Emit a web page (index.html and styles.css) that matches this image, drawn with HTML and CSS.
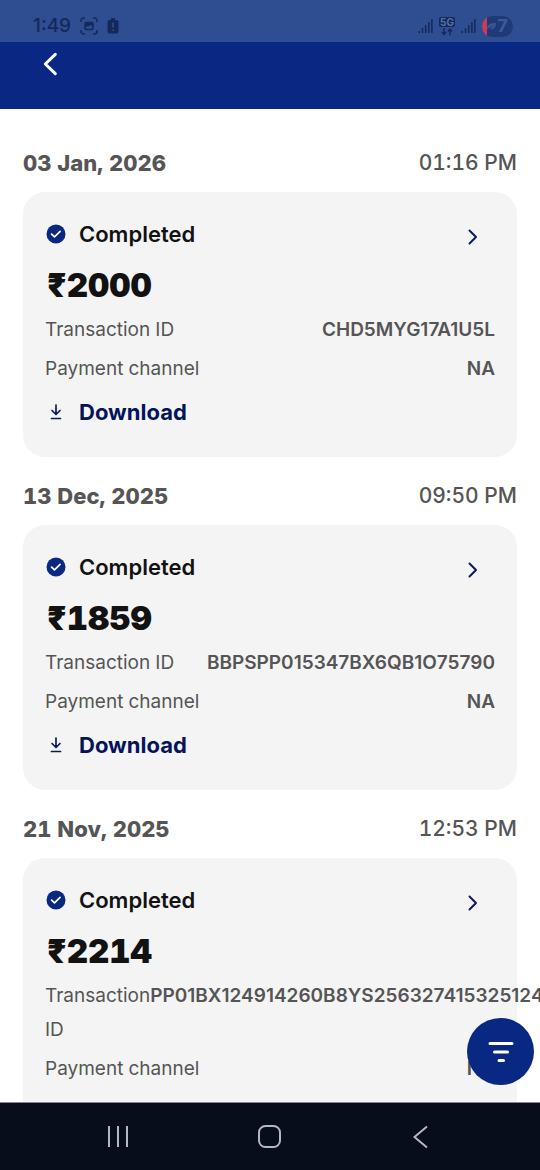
FILE: index.html
```html
<!DOCTYPE html>
<html lang="en">
<head>
<meta charset="utf-8">
<meta name="viewport" content="width=device-width, initial-scale=1">
<title>Transactions</title>
<link rel="stylesheet" href="styles.css">
</head>
<body>
<svg class="sprite" aria-hidden="true">
  <symbol id="check" viewBox="0 0 20 20"><circle cx="10" cy="10" r="9.5" fill="#092884"/><path d="M5.6 10.2l2.9 2.7 5.6-5.5" fill="none" stroke="#fff" stroke-width="1.7" stroke-linecap="round" stroke-linejoin="round"/></symbol>
  <symbol id="chevron" viewBox="0 0 12 18"><path d="M2.5 2.500L9 9l-6.500 6.500" fill="none" stroke="#0a1c60" stroke-width="2" stroke-linecap="round" stroke-linejoin="round"/></symbol>
  <symbol id="download" viewBox="0 0 20 20"><path d="M10 3v8.500M6 8.500l4 4 4-4M5.500 16.500h9" fill="none" stroke="#0a1c60" stroke-width="1.700" stroke-linecap="round" stroke-linejoin="round"/></symbol>
  <symbol id="signal" viewBox="0 0 15 16"><path d="M1.200 13v2M4.500 10v5M7.700 7v8M10.900 4v11M13.900 1v14" fill="none" stroke="currentColor" stroke-width="1.500"/></symbol>
</svg>
<div class="screen">
  <div class="status">
    <div class="status-group">
      <span class="clock">1:49</span>
      <svg width="18" height="18" viewBox="0 0 18 18"><path d="M1 5V3.500A2.500 2.500 0 013.500 1H5M13 1h1.500A2.500 2.500 0 0117 3.500V5M17 13v1.500a2.500 2.500 0 01-2.500 2.500H13M5 17H3.500A2.500 2.500 0 011 14.500V13" fill="none" stroke="currentColor" stroke-width="1.500"/><rect x="5" y="5.500" width="8" height="7" rx="1.500" fill="none" stroke="currentColor" stroke-width="1.600"/><path d="M5 5.500h8v4l-2.500-1.500-2 1.500H5z" fill="currentColor"/></svg>
      <svg width="12" height="18" viewBox="0 0 12 18"><path d="M4 1h4v2h1.500A2 2 0 0111.500 5v9.500a2 2 0 01-2 2h-7a2 2 0 01-2-2V5a2 2 0 012-2H4z" fill="currentColor"/><path d="M6 5.500v5M6 12.500v1.500" stroke="#2f4e92" stroke-width="1.600"/></svg>
    </div>
    <div class="status-group status-right">
      <svg width="15" height="16"><use href="#signal"/></svg>
      <span class="network"><b>5G</b><svg width="12" height="8" viewBox="0 0 12 8"><path d="M3 0v6M1 4l2 2.500L5 4M9 7.500V1M7 3.500L9 1l2 2.500" fill="none" stroke="currentColor" stroke-width="1.400"/></svg></span>
      <svg width="15" height="16"><use href="#signal"/></svg>
      <span class="battery"><svg width="9" height="8" viewBox="0 0 9 8"><path d="M0 7C0 2 4 1 9 1c0 5-3 7-6 6L7 3" fill="#36569b"/></svg>7</span>
    </div>
  </div>
  <header class="header">
    <button class="icon-button" aria-label="Back"><svg width="16" height="26" viewBox="0 0 16 26"><path d="M13.300 3.300L3.300 13l10 9.700" fill="none" stroke="#fff" stroke-width="3" stroke-linecap="round" stroke-linejoin="round"/></svg></button>
  </header>
  <main class="list">
    <section class="entry">
      <div class="entry-head"><h2>03 Jan, 2026</h2><time>01:16 PM</time></div>
      <article class="card">
        <div class="state"><svg width="20" height="20"><use href="#check"/></svg><span>Completed</span><button class="icon-button" aria-label="Details"><svg width="12" height="18"><use href="#chevron"/></svg></button></div>
        <p class="amount">₹2000</p>
        <dl class="facts">
          <div><dt>Transaction ID</dt><dd>CHD5MYG17A1U5L</dd></div>
          <div><dt>Payment channel</dt><dd>NA</dd></div>
        </dl>
        <button class="download"><svg width="20" height="20"><use href="#download"/></svg>Download</button>
      </article>
    </section>
    <section class="entry">
      <div class="entry-head"><h2>13 Dec, 2025</h2><time>09:50 PM</time></div>
      <article class="card">
        <div class="state"><svg width="20" height="20"><use href="#check"/></svg><span>Completed</span><button class="icon-button" aria-label="Details"><svg width="12" height="18"><use href="#chevron"/></svg></button></div>
        <p class="amount">₹1859</p>
        <dl class="facts">
          <div><dt>Transaction ID</dt><dd>BBPSPP015347BX6QB1O75790</dd></div>
          <div><dt>Payment channel</dt><dd>NA</dd></div>
        </dl>
        <button class="download"><svg width="20" height="20"><use href="#download"/></svg>Download</button>
      </article>
    </section>
    <section class="entry">
      <div class="entry-head"><h2>21 Nov, 2025</h2><time>12:53 PM</time></div>
      <article class="card">
        <div class="state"><svg width="20" height="20"><use href="#check"/></svg><span>Completed</span><button class="icon-button" aria-label="Details"><svg width="12" height="18"><use href="#chevron"/></svg></button></div>
        <p class="amount">₹2214</p>
        <dl class="facts">
          <div><dt>Transaction ID</dt><dd>PP01BX124914260B8YS256327415325124</dd></div>
          <div><dt>Payment channel</dt><dd>NA</dd></div>
        </dl>
      </article>
    </section>
  </main>
  <button class="filter" aria-label="Filter"><svg width="28" height="24" viewBox="0 0 28 24"><path d="M3 3.500h22M7.500 12h13M12 20.500h4.500" stroke="#fff" stroke-width="3" stroke-linecap="round"/></svg></button>
  <nav class="navbar">
    <button class="icon-button" aria-label="Recent apps"><svg width="24" height="24" viewBox="0 0 24 24"><path d="M3 1v21M12 1v21M21 1v21" stroke="#b4b8c2" stroke-width="2"/></svg></button>
    <button class="icon-button" aria-label="Home"><svg width="24" height="24" viewBox="0 0 24 24"><rect x="1" y="1" width="21" height="21" rx="6.500" fill="none" stroke="#b4b8c2" stroke-width="2"/></svg></button>
    <button class="icon-button" aria-label="Back"><svg width="24" height="24" viewBox="0 0 24 24"><path d="M17 1.500L4.500 12 17 22.500" fill="none" stroke="#b4b8c2" stroke-width="2"/></svg></button>
  </nav>
</div>
</body>
</html>
```
FILE: styles.css
```css
* { box-sizing: border-box; margin: 0; padding: 0; }
body { font-family: Inter, "Noto Sans", sans-serif; font-variant-numeric: tabular-nums; background: #fff; color: #121212; }
button { font: inherit; color: inherit; background: none; border: 0; cursor: pointer; }
svg { display: block; flex: none; }
.sprite { position: absolute; width: 0; height: 0; }
.screen { position: relative; height: 100vh; display: flex; flex-direction: column; overflow: hidden; }
.icon-button { display: flex; align-items: center; justify-content: center; }

.status { flex: none; display: flex; justify-content: space-between; align-items: center; padding: 10px 27px 0 33px; background: #2f4e92; color: #15285a; height: 42px; }
.status-group { display: flex; align-items: center; gap: 9px; }
.status-right { gap: 6px; }
.clock { font-size: 19px; font-weight: 500; line-height: 24px; font-variant-numeric: normal; }
.network { display: flex; flex-direction: column; align-items: center; gap: 1px; }
.network b { background: #15285a; color: #5671aa; font-size: 10px; line-height: 10px; padding: 0 1px; border-radius: 2px; }
.battery { display: flex; align-items: center; justify-content: center; gap: 1px; width: 31px; height: 21px; border-radius: 11px; background: linear-gradient(90deg, #cf3b52 5px, #203a77 5px); color: #3d5a98; font-size: 18px; font-weight: 700; line-height: 20px; }

.header { flex: none; height: 67px; padding: 9px 42px; background: #092884; }

.list { flex: 1; min-height: 0; overflow: hidden; display: flex; flex-direction: column; gap: 25px; padding: 40px 23px 0; }
.entry { display: flex; flex-direction: column; gap: 15px; flex: none; }
.entry-head { display: flex; justify-content: space-between; align-items: center; color: #555; font-size: 21px; line-height: 28px; }
.entry-head h2 { font-size: 22px; font-weight: 800; }
.entry-head time { font-weight: 500; }
.card { background: #f4f4f4; border-radius: 22px; padding: 26px 22px 29px; min-height: 265px; }
.state { display: flex; align-items: center; gap: 13px; padding: 0 16px 0 1px; font-size: 22px; font-weight: 600; line-height: 32px; }
.state .icon-button { margin-left: auto; padding-top: 6px; }
.amount { padding: 0 2px; font-size: 33px; font-weight: 900; line-height: 40px; margin: 15px 0 8px; }
.facts { display: flex; flex-direction: column; gap: 5px; color: #555; font-size: 19px; line-height: 34px; }
.facts div { display: flex; justify-content: space-between; }
.facts dd { font-weight: 600; font-variant-numeric: normal; text-align: right; }
.download { display: flex; align-items: center; gap: 13px; margin-top: 11px; padding-left: 1px; color: #03145a; font-size: 22px; font-weight: 700; line-height: 30px; }

.filter { position: absolute; right: 6px; bottom: 85px; width: 67px; height: 67px; border-radius: 50%; background: #092884; display: flex; align-items: center; justify-content: center; }
.navbar { flex: none; height: 68px; display: flex; justify-content: space-between; align-items: center; padding: 0 106px; background: #080d1b; border-top: 1px solid #85878c; }
```
